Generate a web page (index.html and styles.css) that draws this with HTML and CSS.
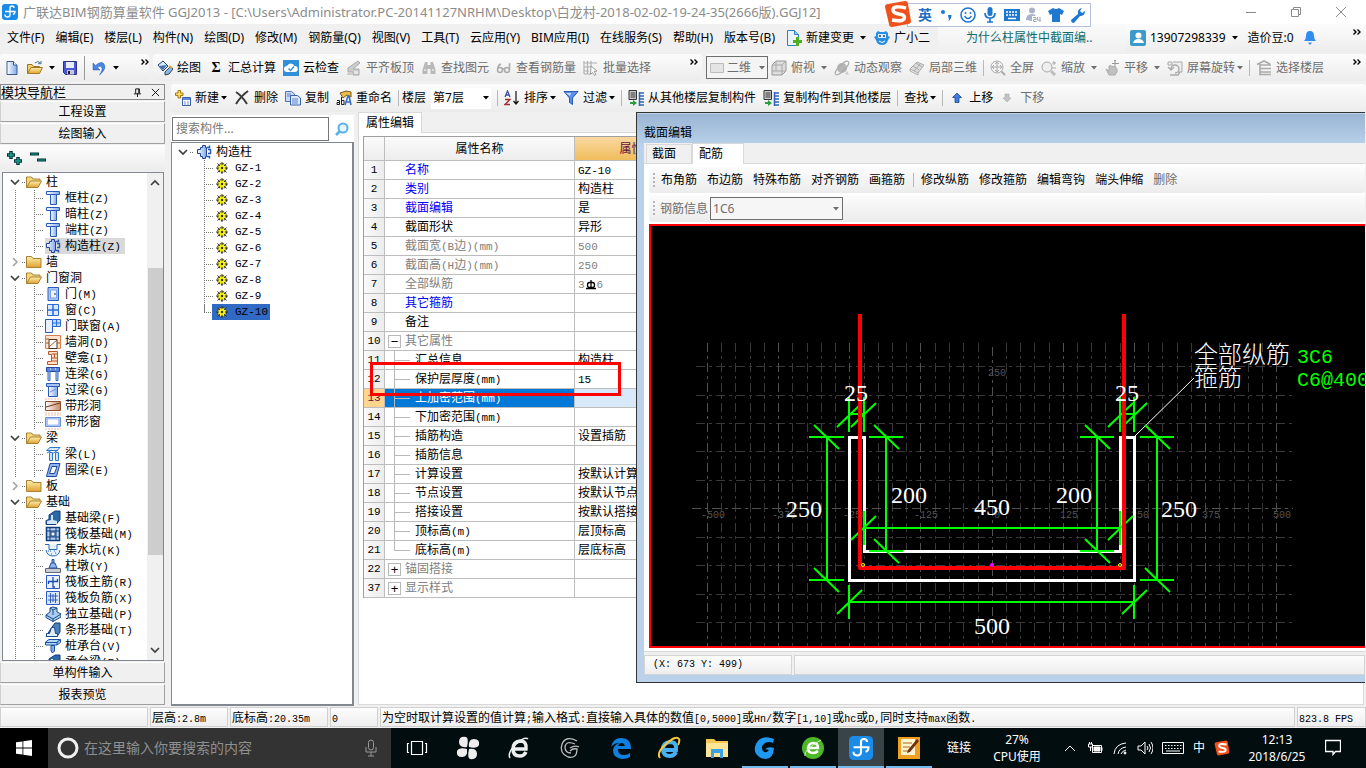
FILE: index.html
```html
<!DOCTYPE html>
<html lang="zh-CN">
<head>
<meta charset="utf-8">
<title>广联达BIM钢筋算量软件 GGJ2013</title>
<link rel="stylesheet" href="styles.css">
</head>
<body>
<svg class="defs" aria-hidden="true">
  <defs>
    <linearGradient id="gBlue" x1="0" x2="1"><stop offset="0" stop-color="#fff"/><stop offset="1" stop-color="#7fa8ec"/></linearGradient>
    <linearGradient id="gGold" y1="0" x2="0" y2="1"><stop offset="0" stop-color="#fff0b0"/><stop offset="1" stop-color="#e0a030"/></linearGradient>
    <linearGradient id="gBrown" x1="0" x2="1"><stop offset="0" stop-color="#fff"/><stop offset="1" stop-color="#c98a60"/></linearGradient>
  </defs>
  <symbol id="caret" viewBox="0 0 6 4"><path d="M0 0h6L3 3.500z" fill="currentColor"/></symbol>
  <symbol id="more" viewBox="0 0 8 6"><path d="M.5.500 3 3 .5 5.500M4.500.500 7 3 4.500 5.500" fill="none" stroke="#000" stroke-width="1.400"/></symbol>
  <symbol id="app" viewBox="0 0 16 16"><rect width="16" height="16" rx="3" fill="#1b8be8"/><path d="M8 3v7.500Q8 13 5.500 13T3 10.500M3 7.500h10q0 2.500-2 3M8 4q0-2 2-2t2 2" fill="none" stroke="#fff" stroke-width="1.400"/></symbol>
  <symbol id="new" viewBox="0 0 16 16"><path d="M3 1.500h6.500l3.500 3.500v9.500H3z" fill="url(#gBlue)" stroke="#3c5c8c"/><path d="M9.500 1.500V5H13" fill="#fff" stroke="#3c5c8c"/></symbol>
  <symbol id="open" viewBox="0 0 16 16"><path d="M.5 13.500v-9h4.500l1.500 2h6v2" fill="#f0cf70" stroke="#9a7422"/><path d="M.5 13.500 4 7.500h11.500l-3 6z" fill="url(#gGold)" stroke="#a67a20"/><path d="M8 3q3-3 5.500 0M14 1v2.700h-3" fill="none" stroke="#4b6e9c"/></symbol>
  <symbol id="save" viewBox="0 0 16 16"><path d="M1.500 1.500h13v13h-11l-2-2z" fill="#4a57d8" stroke="#2a2f80"/><path d="M4 2h8v6H4z" fill="#e8ecff"/><path d="M5 10h7v4.500H5z" fill="#c8c8d8"/><path d="M6 11h2v3H6z" fill="#222"/></symbol>
  <symbol id="undo" viewBox="0 0 16 16"><path d="M4.500 5.500Q10 .5 13 4q3 5-4.500 11 4-6 2-8-2-1.500-4 .5L9 10H2V3z" fill="#4a84e4" stroke="#2458b0" stroke-width=".5"/></symbol>
  <symbol id="paint" viewBox="0 0 16 16"><path d="M1 5l5-4 5 5-5 5z" fill="#dbe8fa" stroke="#23406e"/><path d="M2 6l8-1-4 5z" fill="#3f6fb5"/><path d="M8 12l5-5 3 2-4 5-4 1z" fill="#8bb8ea" stroke="#345"/><path d="M12 6l3 2" stroke="#e0a040" stroke-width="2"/></symbol>
  <symbol id="cloud" viewBox="0 0 16 16"><path d="M0 0h16v16H0z" fill="#2f8fd8"/><path d="M4 12a3 3 0 0 1 0-6 4 4 0 0 1 7.500 0A3 3 0 0 1 12 12z" fill="#fff"/><path d="m5.500 8.500 2 2 3.500-4" fill="none" stroke="#2f8fd8" stroke-width="1.300"/></symbol>
  <symbol id="slab" viewBox="0 0 16 16"><path d="M2 8 12 1l2 2-7 6h6v6H7v-3H2zM1 14h5" fill="#ccc" stroke="#aaa"/><path d="M9 11v3M11 11v3" stroke="#fff"/></symbol>
  <symbol id="find" viewBox="0 0 16 16"><path d="M4 2h2.500v3h3V2H12l2.500 8v4h-5V9h-3v5h-5v-4z" fill="#b8b8b8"/><path d="M3 10h2M11 10h2" stroke="#fff"/></symbol>
  <symbol id="glasses" viewBox="0 0 16 16"><g fill="none" stroke="#aaa" stroke-width="1.500"><circle cx="4" cy="10" r="2.500"/><circle cx="11" cy="10" r="2.500"/><path d="M6.500 9h2M2 8q0-3 3-4M13.500 10V4h1"/></g></symbol>
  <symbol id="batch" viewBox="0 0 16 16"><path d="M1 1v13M4.500 1v13M8 1v6M1 3h13M1 7h8M1 11h5M1 14h6" stroke="#b0b0b0" stroke-width="1.200"/><path d="M8 6l6 5-3 .5 2 3-1.500 1-2-3-2 2z" fill="#fff" stroke="#999"/></symbol>
  <symbol id="cube" viewBox="0 0 16 16"><path d="M1 5 5 1h10v10l-4 4H1z" fill="#ddd" stroke="#999"/><path d="M1 5h10v10M11 5l4-4M5 1v10H1M5 11h10" fill="none" stroke="#aaa"/></symbol>
  <symbol id="orbit" viewBox="0 0 16 16"><circle cx="8" cy="8" r="5" fill="#b5b5b5"/><ellipse cx="8" cy="8" rx="9" ry="3" transform="rotate(-45 8 8)" fill="none" stroke="#aaa"/><path d="M11 14l4 1-2-4z" fill="#ccc"/></symbol>
  <symbol id="local3" viewBox="0 0 16 16"><path d="m1 9 7-7 7 3-6 8z" fill="#ddd" stroke="#aaa"/><path d="m4 6 6 4M7 3l6 4M5 11l6-7M1 9v2l8 4V13" stroke="#aaa" fill="none"/></symbol>
  <symbol id="fit" viewBox="0 0 16 16"><circle cx="7" cy="7" r="6" fill="#f4f4f4" stroke="#aaa"/><path d="M7 3v8M3 7h8M5 4l2-2 2 2M5 10l2 2 2-2M4 5 2 7l2 2M10 5l2 2-2 2" fill="none" stroke="#aaa"/><path d="m11.500 11.500 3.500 3.500" stroke="#aaa" stroke-width="2"/></symbol>
  <symbol id="zoomi" viewBox="0 0 16 16"><circle cx="6" cy="7" r="5" fill="#eee" stroke="#aaa"/><path d="m10 11 4 4" stroke="#bbb" stroke-width="3"/><path d="M11 3h4M13 1v4M11 8h4" stroke="#aaa"/></symbol>
  <symbol id="pan" viewBox="0 0 16 16"><path d="M2 9l3 2V6q1-1 2 0l4 1q3 1 2 5l-2 3H5z" fill="#c0c0c0" stroke="#aaa"/><path d="M11 0v7M8 3.500h7M10 1l1-1 1 1" stroke="#999" fill="none"/></symbol>
  <symbol id="rotate" viewBox="0 0 16 16"><path d="M1 2h4v3H1zM6 2h9v10h-4" fill="#eee" stroke="#aaa"/><path d="M4 9a4 4 0 1 1 4 4M1 7l3 3 3-3M3 15h8l2-3" fill="none" stroke="#aaa" stroke-width="1.400"/></symbol>
  <symbol id="floors" viewBox="0 0 16 16"><path d="M1 4.500 8 1l6 3M4 5h11M4 8.500h11M4 12h11M3 14.500h12M4 4v11" fill="none" stroke="#aaa" stroke-width="1.600"/></symbol>
  <symbol id="flat" viewBox="0 0 16 16"><path d="M1.500 3.500h13v9h-13z" fill="#e4e4e4" stroke="#bbb"/></symbol>
  <symbol id="add" viewBox="0 0 16 16"><path d="M3 .5h2.500V3H8v2.500H5.500V8H3V5.500H.5V3H3z" fill="#ffe060" stroke="#a07a10"/><path d="M7.500 7.500h8v8h-8z" fill="#fff" stroke="#3b62ad"/><path d="M8 8h7v2H8z" fill="#5b8be0"/><path d="M9 12h2M12 12h2M9 14h2M12 14h2" stroke="#6a8fd8"/></symbol>
  <symbol id="del" viewBox="0 0 16 16"><path d="M2 2q6 4 11 12M14 1Q7 6 2 14" fill="none" stroke="#3c3c3c" stroke-width="2"/></symbol>
  <symbol id="copy" viewBox="0 0 16 16"><path d="M.5 1.500h6l3 2.500v7.500h-9z" fill="#c8dafa" stroke="#4f74b5"/><path d="M5.500 5.500h7l3 2.500v7h-10z" fill="#dce8ff" stroke="#3a62ab"/><path d="M2 4h4M2 6h3M7 9h6M7 11h6M7 13h6" stroke="#5d86cc"/></symbol>
  <symbol id="rename" viewBox="0 0 16 16"><path d="M4 3l6-2 5 1v5l-4-2-4 3z" fill="#e8bd4e" stroke="#7a5a18"/><path d="M1 10.500h2.500v4H1v-2h2M5.500 7v7.500h2.500v-4H5.500" fill="none" stroke="#222"/><path d="m9 15 3-9h1l2 9M10 12h4" fill="none" stroke="#3a6cc8" stroke-width="1.600"/></symbol>
  <symbol id="sort" viewBox="0 0 16 16"><path d="M1 7 3.500 1 6 7M2 5h3" fill="none" stroke="#3a50a0" stroke-width="1.300"/><path d="M1 9.500h5l-5 5h5" fill="none" stroke="#a03030" stroke-width="1.300"/><path d="M12 1v13M9.500 11l2.500 3 2.500-3" fill="none" stroke="#111" stroke-width="1.200"/></symbol>
  <symbol id="funnel" viewBox="0 0 16 16"><path d="M1 1.500h14L9.500 8v6.500l-3-2V8z" fill="#5a90e8" stroke="#2a5ab8"/><path d="M3 3h5L7 6z" fill="#c8dcff"/></symbol>
  <symbol id="flcopy" viewBox="0 0 16 16"><path d="M1 .5h7.500v9H1z" fill="#ccc" stroke="#333"/><path d="M2.500 3h5M2.500 5h5M2.500 7h5" stroke="#333"/><path d="M2 12h3v-2l4 3-4 3v-2H2z" fill="#28a040"/><path d="M11 3h5M11 6h5M11 9h5M11 12h5M11 15h5M11.500 2v14" stroke="#2f65b8" stroke-width="1.500"/></symbol>
  <symbol id="up" viewBox="0 0 16 16"><path d="m8 3 4.500 4.500H10v5H6v-5H3.500z" fill="#3f7be0" stroke="#1c4690" stroke-width=".8"/></symbol>
  <symbol id="down" viewBox="0 0 16 16"><path d="m7 12 4-4H9V4H5v4H3z" fill="#c4c4c4" stroke="#aaa" stroke-width=".6"/></symbol>
  <symbol id="chg" viewBox="0 0 16 16"><path d="M1.500.5h7l4 4v11h-11z" fill="#eaf4ff" stroke="#2c7fc0"/><path d="M8.500.5v4h4" fill="#9cc8ee" stroke="#2c7fc0"/><path d="M10 7h3v3h3v3h-3v3h-3v-3H7v-3h3z" fill="#4cb020"/></symbol>
  <symbol id="robot" viewBox="0 0 16 16"><path d="M2 3l2-2 2 1h4l2-1 2 2v3l2 1-2 3q-1 5-6 5t-6-5L0 7l2-1z" fill="#2a8ee0"/><path d="M4 4h8v4H4z" fill="#d8f0ff"/><path d="M6 5v2M10 5v2" stroke="#124" stroke-width="1.300"/><path d="M5 11q3 3 6 0" stroke="#fff" fill="none"/></symbol>
  <symbol id="user" viewBox="0 0 16 16"><rect width="16" height="16" rx="2" fill="#3c9bc8"/><circle cx="8.500" cy="5.500" r="3" fill="#fff"/><path d="M3 13q1-4 5.500-4t5.500 4z" fill="#fff"/></symbol>
  <symbol id="bell" viewBox="0 0 16 16"><path d="M8 1q4 0 4 5 0 3 2 5H2q2-2 2-5 0-5 4-5z" fill="#2f8cf0"/><path d="M6 12.500h4L8 15z" fill="#2f8cf0"/></symbol>
  <symbol id="fopen" viewBox="0 0 16 16"><path d="M.5 13.500V3h5l1.500 2h7v3" fill="#f5d77c" stroke="#a5823a"/><path d="m.5 13.500 4-6.500h11l-3.500 6.500z" fill="url(#gGold)" stroke="#a88230"/></symbol>
  <symbol id="fclosed" viewBox="0 0 16 16"><path d="M.5 13.500V2.500h5l1.500 2h8v9z" fill="url(#gGold)" stroke="#a88230"/></symbol>
  <symbol id="col" viewBox="0 0 16 16"><path d="M1.500 1.500h13v3h-13z" fill="url(#gBlue)" stroke="#2a58b8"/><path d="M5.500 4.500h6v10h-6z" fill="url(#gBlue)" stroke="#2a58b8"/></symbol>
  <symbol id="gz" viewBox="0 0 16 16"><path d="M4.500 3.500h2v-2h3v2h1v9h-1v2h-3v-2h-2v-3h-3v-4h3z" fill="url(#gBlue)" stroke="#1e4290"/><path d="M10.500 3.500h3v-2M12 5.500h2.500v4H12M10.500 12.500h3v2" fill="none" stroke="#2a58b0" stroke-width="1.500"/></symbol>
  <symbol id="door" viewBox="0 0 16 16"><path d="M3 1.500h10.500v13H3z" fill="#a9c5f8" stroke="#2a5cc0"/><path d="M5.500 4h6v8h-6z" fill="#eef4ff" stroke="#7aa2e8"/><path d="M9 8h2" stroke="#224"/></symbol>
  <symbol id="win" viewBox="0 0 16 16"><path d="M2.500 2.500h11v11h-11z" fill="#dce9ff" stroke="#2a6cd8"/><path d="M8 2v12M2 8h12" stroke="#2a6cd8" stroke-width="1.500"/></symbol>
  <symbol id="dwin" viewBox="0 0 16 16"><path d="M.5 1.500h7v13h-7z" fill="#e8f0ff" stroke="#2a58b8"/><path d="M7.500 1.500h8v7h-8zM11.500 1.500v7M7.500 5h8" fill="#c4dafc" stroke="#2a6cd8"/></symbol>
  <symbol id="hole" viewBox="0 0 16 16"><path d="M.5 1.500h15v13H.5z" fill="#ffe3cc" stroke="#d08050"/><path d="M4 5.500h8v9H4z" fill="#fff" stroke="#553020"/><path d="m4 13 8-7M1 5h3M1 9h3M12 9h3" stroke="#a05828"/></symbol>
  <symbol id="niche" viewBox="0 0 16 16"><path d="M3.500 1.500h9v13h-10v-3h4v-7h-3z" fill="#ffe0c8" stroke="#b05a28"/><path d="M7 4h5M7 8h5M7 11h5M9.500 4v4" stroke="#b05a28"/></symbol>
  <symbol id="lbeam" viewBox="0 0 16 16"><path d="M1.500 1.500h13v4h-13z" fill="#5c88d8" stroke="#1e4aa0"/><path d="M3 5.500h2v9H3zM11 5.500h2v9h-2z" fill="#b8d0f8" stroke="#3a68c0"/><path d="M5 3h1M10 3h1" stroke="#fff"/></symbol>
  <symbol id="gbeam" viewBox="0 0 16 16"><path d="M1.500 1.500h13v3h-13z" fill="#a8c4f0" stroke="#2a58b8"/><path d="M3.500 4.500h9v10h-9z" fill="url(#gBlue)" stroke="#2a58b8"/><path d="m5 10 6-3" stroke="#6890d8"/></symbol>
  <symbol id="strip" viewBox="0 0 16 16"><path d="M0 1h16M0 15h16" stroke="#f0b8a8" stroke-dasharray="2 1"/><path d="M.5 3.500h15v9H.5z" fill="url(#gBrown)" stroke="#8a5030"/><path d="m1 9 14-4" stroke="#6b3a1c"/></symbol>
  <symbol id="stripw" viewBox="0 0 16 16"><path d="M0 1h16M0 15h16" stroke="#f0b8a8" stroke-dasharray="2 1"/><path d="M.5 3.500h15v9H.5z" fill="#a8c4f4" stroke="#6a8cd0"/><path d="M3 5.500h10v5H3z" fill="#fff"/></symbol>
  <symbol id="beam" viewBox="0 0 16 16"><path d="M1.500 4.500 5 1.500h10l-3 3z" fill="#dcebff" stroke="#2b7ac8"/><path d="M4.500 6.500h3v8h-3zM10.500 6.500h3v8h-3z" fill="#cfe4ff" stroke="#2b7ac8"/><path d="m2 7 5-3M7 8l6-4" stroke="#2b7ac8"/></symbol>
  <symbol id="ring" viewBox="0 0 16 16"><path d="M5 1.500h10L11.500 14.500h-10z" fill="#90b4f0" stroke="#1e48a0"/><path d="M7 4.500h5L9.500 11.500h-5z" fill="#fff" stroke="#1e48a0"/></symbol>
  <symbol id="fbeam" viewBox="0 0 16 16"><path d="M1 14.500v-4l3-1V5l6-4h5v9l-4 4.500z" fill="#2c68a8" stroke="#123c78"/><path d="M2 14v-3l4-1V5h2v5l4 1v3z" fill="#d4e6fa"/></symbol>
  <symbol id="raft" viewBox="0 0 16 16"><path d="M1.500 1.500h13v13h-13z" fill="#b8d0f0" stroke="#0f3c7c" stroke-width="1.500"/><path d="M5 1v14M11 1v14M1 5h14M1 11h14" stroke="#0f3c7c"/><path d="M6 6h4v4H6z" fill="#fff" stroke="#0f3c7c"/></symbol>
  <symbol id="sump" viewBox="0 0 16 16"><path d="M0 2.500h4v5h8v-5h4M1 8q1 6 7 6t7-6" fill="#e4f0ff" stroke="#2a68b8"/><path d="M5 9h1M9 9h1M6 12h1M10 11h1M3 9h1" stroke="#2a68b8"/></symbol>
  <symbol id="pier" viewBox="0 0 16 16"><path d="M.5 10.500h15v4H.5z" fill="#c8ccd4" stroke="#667"/><path d="M4 10l2-5h4l2 5zM7 5V1.500h2V5" fill="#8fb4ec" stroke="#2450a0"/></symbol>
  <symbol id="rbar" viewBox="0 0 16 16"><path d="M1.500 1.500h13v13h-13z" fill="#eaf2ff" stroke="#2a5cc8"/><path d="M8 3v10h2M3.500 10V7.500h9V5" fill="none" stroke="#1a4ab0" stroke-width="1.300"/></symbol>
  <symbol id="rneg" viewBox="0 0 16 16"><path d="M1.500 1.500h13v13h-13z" fill="#dbe8fc" stroke="#2a5cc8"/><path d="M5.500 3v10M10.500 3v10M3 6h10M3 10h10M8 4v8" stroke="#3260b8"/></symbol>
  <symbol id="indep" viewBox="0 0 16 16"><path d="M1 9 5 6V2l3-1 4 1v4l4 2v3l-8 4.500-7-4z" fill="#a8cdee" stroke="#1a4c88"/><path d="m1 9 7 4 8-5M8 13v3M5 2l3 2 4-2M8 4v5" fill="none" stroke="#1a4c88"/></symbol>
  <symbol id="sfound" viewBox="0 0 16 16"><path d="M1 14.500 5 8l5-7h5v9l-3 4.500z" fill="#4b80ba" stroke="#123c78"/><path d="M1.500 14.500v-3h3l2-6h3l1 6h2v3z" fill="#e0eefc" stroke="#1b4c88"/></symbol>
  <symbol id="pile" viewBox="0 0 16 16"><path d="M.5 4 4 1.500h11.500v3L12 7H.5z" fill="#b8d8f8" stroke="#1a50a0"/><path d="M.5 4.500H12M12 7V4l3-2M6 7.500h3.500V13L7.500 15 6 13z" fill="#7fb0e8" stroke="#1a50a0"/></symbol>
  <symbol id="gear" viewBox="0 0 12 12"><circle cx="6" cy="6" r="4.500" fill="#f8f020" stroke="#222" stroke-dasharray="2 1"/><path d="M6 0v12M0 6h12M1.500 1.500l9 9M10.500 1.500l-9 9" stroke="#333" stroke-width="1"/><circle cx="6" cy="6" r="3" fill="#f8f020"/><circle cx="6" cy="6" r="1.200" fill="#333"/></symbol>
  <symbol id="exp" viewBox="0 0 10 10"><path d="m1 3 4 4 4-4" fill="none" stroke="#404040" stroke-width="1.700"/></symbol>
  <symbol id="clp" viewBox="0 0 10 10"><path d="m3 1 4 4-4 4" fill="none" stroke="#a0a0a0" stroke-width="1.500"/></symbol>
  <symbol id="sg" viewBox="0 0 28 28"><path d="M1 7q0-3 3-3L21 1q3 0 3 3l3 17q0 3-3 3L8 27q-3 0-3-3z" fill="#f0501c"/><path d="M22 8Q9 5 9 10q0 3 6 4 7 1 5 5-2 3-12 1" fill="none" stroke="#fff" stroke-width="3.500"/></symbol>
</svg>

<header class="titlebar">
  <svg class="i16"><use href="#app"/></svg>
  <h1>广联达BIM钢筋算量软件 GGJ2013 - [C:\Users\Administrator.PC-20141127NRHM\Desktop\白龙村-2018-02-02-19-24-35(2666版).GGJ12]</h1>
  <div class="winctl">
    <button aria-label="最小化"><svg viewBox="0 0 12 12"><path d="M1 6.500h10"/></svg></button>
    <button aria-label="还原"><svg viewBox="0 0 12 12"><path d="M1.500 3.500h7v7h-7zM3.500 3V1.500h7v7H9"/></svg></button>
    <button aria-label="关闭"><svg viewBox="0 0 12 12"><path d="m1 1 10 10M11 1 1 11"/></svg></button>
  </div>
</header>

<div class="ime">
  <svg class="imelogo"><use href="#sg"/></svg>
  <div class="imebar">
    <b>英</b>
    <svg viewBox="0 0 16 16"><circle cx="5" cy="5" r="2"/><path d="M10 8h3.500q0 4-3 6 1-2 0-3z"/></svg>
    <svg viewBox="0 0 16 16"><circle cx="8" cy="8" r="7" fill="none" stroke="#1f78d0" stroke-width="1.600"/><circle cx="5.500" cy="6" r="1"/><circle cx="10.500" cy="6" r="1"/><path d="M4.500 9q3.500 5 7 0" fill="none" stroke="#1f78d0" stroke-width="1.400"/></svg>
    <svg viewBox="0 0 16 16"><rect x="5.500" y="0" width="5" height="9" rx="2.500"/><path d="M3 6q0 5 5 5t5-5M8 11v4M5 15h6" fill="none" stroke="#1f78d0" stroke-width="1.700"/></svg>
    <svg viewBox="0 0 16 16"><path d="M0 2h16v12H0z"/><path d="M2 5h12M2 8h12" stroke="#fff" stroke-width="1.500" stroke-dasharray="2 1"/><path d="M4 11.500h8" stroke="#fff" stroke-width="1.500"/></svg>
    <svg viewBox="0 0 16 16" class="dim"><circle cx="6" cy="3.500" r="3"/><path d="M0 13q0-6 6-6 3 0 4 2H6v5z"/><path d="M7 10.500h3v2H7.500v2h3M11.500 10v3h3M14 10v5" fill="none" stroke="#9aa8c0"/></svg>
    <svg viewBox="0 0 16 16"><path d="M5 1q3 2 6 0l5 3-2 4-2-1v8H4V7L2 8 0 4z"/></svg>
    <svg viewBox="0 0 16 16"><path d="M1 13 8 7Q7 2 12 1l-2 3 2 2 3-2q0 5-5 5l-6 7q-3 0-3-3z"/></svg>
  </div>
</div>

<nav class="menubar">
  <div class="menus">
    <button>文件(F)</button><button>编辑(E)</button><button>楼层(L)</button><button>构件(N)</button><button>绘图(D)</button><button>修改(M)</button><button>钢筋量(Q)</button><button>视图(V)</button><button>工具(T)</button><button>云应用(Y)</button><button>BIM应用(I)</button><button>在线服务(S)</button><button>帮助(H)</button><button>版本号(B)</button>
    <button class="tb"><svg class="i16"><use href="#chg"/></svg>新建变更<svg class="car wide"><use href="#caret"/></svg></button>
    <button class="tb robot"><svg class="i16"><use href="#robot"/></svg>广小二</button>
  </div>
  <a class="tip" href="#">为什么柱属性中截面编..</a>
  <div class="account">
    <button class="tb"><svg class="i16"><use href="#user"/></svg>13907298339<svg class="car wide"><use href="#caret"/></svg></button>
    <span>造价豆:0</span>
    <button class="tb bell" aria-label="通知"><svg class="i16"><use href="#bell"/></svg></button>
    <svg class="more"><use href="#more"/></svg>
  </div>
</nav>

<div class="toolrow">
  <div class="bar bar-file">
    <button aria-label="新建"><svg class="i16"><use href="#new"/></svg></button>
    <button class="tb" aria-label="打开"><svg class="i16"><use href="#open"/></svg><svg class="car wide"><use href="#caret"/></svg></button>
    <button aria-label="保存"><svg class="i16"><use href="#save"/></svg></button>
    <i class="sep tall"></i>
    <button class="tb" aria-label="撤销"><svg class="i16"><use href="#undo"/></svg><svg class="car wide"><use href="#caret"/></svg></button>
    <svg class="more"><use href="#more"/></svg>
  </div>
  <div class="bar bar-edit">
    <button class="tb"><svg class="i16"><use href="#paint"/></svg>绘图</button>
    <button class="tb"><span class="sigma">Σ</span>汇总计算</button>
    <button class="tb"><svg class="i16"><use href="#cloud"/></svg>云检查</button>
    <button class="tb off"><svg class="i16"><use href="#slab"/></svg>平齐板顶</button>
    <button class="tb off"><svg class="i16"><use href="#find"/></svg>查找图元</button>
    <button class="tb off"><svg class="i16"><use href="#glasses"/></svg>查看钢筋量</button>
    <button class="tb off"><svg class="i16"><use href="#batch"/></svg>批量选择</button>
    <svg class="more"><use href="#more"/></svg>
  </div>
  <div class="bar bar-view">
    <label class="viewsel"><svg class="i16"><use href="#flat"/></svg><select aria-label="视图模式"><option>二维</option></select><svg class="car"><use href="#caret"/></svg></label>
    <button class="tb off"><svg class="i16"><use href="#cube"/></svg>俯视<svg class="car wide"><use href="#caret"/></svg></button>
    <button class="tb off"><svg class="i16"><use href="#orbit"/></svg>动态观察</button>
    <button class="tb off"><svg class="i16"><use href="#local3"/></svg>局部三维</button>
    <i class="sep"></i>
    <button class="tb off"><svg class="i16"><use href="#fit"/></svg>全屏</button>
    <button class="tb off"><svg class="i16"><use href="#zoomi"/></svg>缩放<svg class="car wide"><use href="#caret"/></svg></button>
    <button class="tb off"><svg class="i16"><use href="#pan"/></svg>平移<svg class="car wide"><use href="#caret"/></svg></button>
    <button class="tb off"><svg class="i16"><use href="#rotate"/></svg>屏幕旋转<svg class="car"><use href="#caret"/></svg></button>
    <i class="sep"></i>
    <button class="tb off"><svg class="i16"><use href="#floors"/></svg>选择楼层</button>
    <svg class="more"><use href="#more"/></svg>
  </div>
</div>

<main class="work">
  <aside class="nav">
    <div class="navhead"><span>模块导航栏</span>
      <button aria-label="固定"><svg viewBox="0 0 10 10"><path d="M3 6V1h4v5M1 6.500h8M5 6v4M6.500 1v5"/></svg></button>
      <button aria-label="关闭"><svg viewBox="0 0 10 10"><path d="m1 1 8 8M9 1 1 9"/></svg></button>
    </div>
    <button class="navbtn">工程设置</button>
    <button class="navbtn">绘图输入</button>
    <div class="navtools">
      <button aria-label="展开全部"><svg viewBox="0 0 18 16"><path d="M5 1v8M1 5h8M12 7v8M8 11h8" stroke="#033" stroke-width="3.500"/><path d="M5 2v6M2 5h6M12 8v6M9 11h6" stroke="#18a090" stroke-width="1.500"/></svg></button>
      <button aria-label="折叠全部"><svg viewBox="0 0 18 16"><path d="M1 4h9M8 10h9" stroke="#033" stroke-width="3"/><path d="M2 4h7M9 10h7" stroke="#18a090"/></svg></button>
    </div>
    <div class="treebox">
      <ul class="tree">
        <li><svg class="ex"><use href="#exp"/></svg><i class="dot s"></i><svg class="i16"><use href="#fopen"/></svg>柱</li>
        <li class="c"><i class="dot"></i><svg class="i16"><use href="#col"/></svg><span>框柱<em>(Z)</em></span></li>
        <li class="c"><i class="dot"></i><svg class="i16"><use href="#col"/></svg><span>暗柱<em>(Z)</em></span></li>
        <li class="c"><i class="dot"></i><svg class="i16"><use href="#col"/></svg><span>端柱<em>(Z)</em></span></li>
        <li class="c e sel"><i class="dot"></i><div><svg class="i16"><use href="#gz"/></svg><span>构造柱<em>(Z)</em></span></div></li>
        <li><svg class="ex"><use href="#clp"/></svg><i class="dot s"></i><svg class="i16"><use href="#fclosed"/></svg>墙</li>
        <li><svg class="ex"><use href="#exp"/></svg><i class="dot s"></i><svg class="i16"><use href="#fopen"/></svg>门窗洞</li>
        <li class="c"><i class="dot"></i><svg class="i16"><use href="#door"/></svg><span>门<em>(M)</em></span></li>
        <li class="c"><i class="dot"></i><svg class="i16"><use href="#win"/></svg><span>窗<em>(C)</em></span></li>
        <li class="c"><i class="dot"></i><svg class="i16"><use href="#dwin"/></svg><span>门联窗<em>(A)</em></span></li>
        <li class="c"><i class="dot"></i><svg class="i16"><use href="#hole"/></svg><span>墙洞<em>(D)</em></span></li>
        <li class="c"><i class="dot"></i><svg class="i16"><use href="#niche"/></svg><span>壁龛<em>(I)</em></span></li>
        <li class="c"><i class="dot"></i><svg class="i16"><use href="#lbeam"/></svg><span>连梁<em>(G)</em></span></li>
        <li class="c"><i class="dot"></i><svg class="i16"><use href="#gbeam"/></svg><span>过梁<em>(G)</em></span></li>
        <li class="c"><i class="dot"></i><svg class="i16"><use href="#strip"/></svg><span>带形洞</span></li>
        <li class="c e"><i class="dot"></i><svg class="i16"><use href="#stripw"/></svg><span>带形窗</span></li>
        <li><svg class="ex"><use href="#exp"/></svg><i class="dot s"></i><svg class="i16"><use href="#fopen"/></svg>梁</li>
        <li class="c"><i class="dot"></i><svg class="i16"><use href="#beam"/></svg><span>梁<em>(L)</em></span></li>
        <li class="c e"><i class="dot"></i><svg class="i16"><use href="#ring"/></svg><span>圈梁<em>(E)</em></span></li>
        <li><svg class="ex"><use href="#clp"/></svg><i class="dot s"></i><svg class="i16"><use href="#fclosed"/></svg>板</li>
        <li><svg class="ex"><use href="#exp"/></svg><i class="dot s"></i><svg class="i16"><use href="#fopen"/></svg>基础</li>
        <li class="c"><i class="dot"></i><svg class="i16"><use href="#fbeam"/></svg><span>基础梁<em>(F)</em></span></li>
        <li class="c"><i class="dot"></i><svg class="i16"><use href="#raft"/></svg><span>筏板基础<em>(M)</em></span></li>
        <li class="c"><i class="dot"></i><svg class="i16"><use href="#sump"/></svg><span>集水坑<em>(K)</em></span></li>
        <li class="c"><i class="dot"></i><svg class="i16"><use href="#pier"/></svg><span>柱墩<em>(Y)</em></span></li>
        <li class="c"><i class="dot"></i><svg class="i16"><use href="#rbar"/></svg><span>筏板主筋<em>(R)</em></span></li>
        <li class="c"><i class="dot"></i><svg class="i16"><use href="#rneg"/></svg><span>筏板负筋<em>(X)</em></span></li>
        <li class="c"><i class="dot"></i><svg class="i16"><use href="#indep"/></svg><span>独立基础<em>(P)</em></span></li>
        <li class="c"><i class="dot"></i><svg class="i16"><use href="#sfound"/></svg><span>条形基础<em>(T)</em></span></li>
        <li class="c"><i class="dot"></i><svg class="i16"><use href="#pile"/></svg><span>桩承台<em>(V)</em></span></li>
        <li class="c"><i class="dot"></i><svg class="i16"><use href="#fbeam"/></svg><span>承台梁<em>(F)</em></span></li>
      </ul>
      <div class="scroll"><svg class="ex flip"><use href="#exp"/></svg><div class="thumb"></div><svg class="ex"><use href="#exp"/></svg></div>
    </div>
    <button class="navbtn">单构件输入</button>
    <button class="navbtn">报表预览</button>
  </aside>

  <section class="right">
    <div class="bar bar-comp">
      <button class="tb"><svg class="i16"><use href="#add"/></svg>新建<svg class="car"><use href="#caret"/></svg></button>
      <button class="tb"><svg class="i16"><use href="#del"/></svg>删除</button>
      <button class="tb"><svg class="i16"><use href="#copy"/></svg>复制</button>
      <button class="tb"><svg class="i16"><use href="#rename"/></svg>重命名</button>
      <i class="sep"></i>
      <label class="floor">楼层 <span class="floorsel"><select><option>第7层</option></select><svg class="car"><use href="#caret"/></svg></span></label>
      <i class="sep"></i>
      <button class="tb"><svg class="i16"><use href="#sort"/></svg>排序<svg class="car"><use href="#caret"/></svg></button>
      <button class="tb"><svg class="i16"><use href="#funnel"/></svg>过滤<svg class="car"><use href="#caret"/></svg></button>
      <i class="sep"></i>
      <button class="tb"><svg class="i16"><use href="#flcopy"/></svg>从其他楼层复制构件</button>
      <button class="tb"><svg class="i16"><use href="#flcopy"/></svg>复制构件到其他楼层</button>
      <i class="sep"></i>
      <button class="tb">查找<svg class="car"><use href="#caret"/></svg></button>
      <i class="sep"></i>
      <button class="tb"><svg class="i16"><use href="#up"/></svg>上移</button>
      <button class="tb off"><svg class="i16"><use href="#down"/></svg>下移</button>
    </div>
    <div class="panes">
      <section class="comps">
        <div class="search"><input type="text" placeholder="搜索构件..." aria-label="搜索构件"><button aria-label="搜索"><svg viewBox="0 0 14 14"><circle cx="8" cy="6" r="4.500" fill="#e8f6ff" stroke="#58b0e8" stroke-width="2"/><path d="m5 9-4 4" stroke="#58b0e8" stroke-width="2.500"/></svg></button></div>
        <ul class="ctree">
          <li class="top"><svg class="ex"><use href="#exp"/></svg><i class="dot s"></i><svg class="i16"><use href="#gz"/></svg>构造柱</li>
          <li><i class="dot"></i><div><svg class="g"><use href="#gear"/></svg><em>GZ-1</em></div></li>
          <li><i class="dot"></i><div><svg class="g"><use href="#gear"/></svg><em>GZ-2</em></div></li>
          <li><i class="dot"></i><div><svg class="g"><use href="#gear"/></svg><em>GZ-3</em></div></li>
          <li><i class="dot"></i><div><svg class="g"><use href="#gear"/></svg><em>GZ-4</em></div></li>
          <li><i class="dot"></i><div><svg class="g"><use href="#gear"/></svg><em>GZ-5</em></div></li>
          <li><i class="dot"></i><div><svg class="g"><use href="#gear"/></svg><em>GZ-6</em></div></li>
          <li><i class="dot"></i><div><svg class="g"><use href="#gear"/></svg><em>GZ-7</em></div></li>
          <li><i class="dot"></i><div><svg class="g"><use href="#gear"/></svg><em>GZ-8</em></div></li>
          <li><i class="dot"></i><div><svg class="g"><use href="#gear"/></svg><em>GZ-9</em></div></li>
          <li class="e sel"><i class="dot"></i><div><svg class="g"><use href="#gear"/></svg><em>GZ-10</em></div></li>
        </ul>
      </section>

      <section class="editor">
        <div class="tabs"><button class="tab on">属性编辑</button></div>
        <div class="sheet">
          <table class="props">
            <colgroup><col class="cn"><col class="cname"><col class="cval"><col></colgroup>
            <thead><tr><th></th><th>属性名称</th><th class="hot">属性值</th><th></th></tr></thead>
            <tbody>
              <tr><th>1</th><td class="b">名称</td><td><em>GZ-10</em></td><td></td></tr>
              <tr><th>2</th><td class="b">类别</td><td>构造柱</td><td></td></tr>
              <tr><th>3</th><td class="b">截面编辑</td><td>是</td><td></td></tr>
              <tr><th>4</th><td>截面形状</td><td>异形</td><td></td></tr>
              <tr class="dim"><th>5</th><td>截面宽<em>(B</em>边<em>)(mm)</em></td><td><em>500</em></td><td></td></tr>
              <tr class="dim"><th>6</th><td>截面高<em>(H</em>边<em>)(mm)</em></td><td><em>250</em></td><td></td></tr>
              <tr class="dim"><th>7</th><td>全部纵筋</td><td><em>3</em><svg class="rebar" viewBox="0 0 12 12"><path d="M6 1v9M1 9.500h10M4.500 3.500h3q2 0 2 2.500t-2 2.500h-3q-2 0-2-2.500t2-2.500z"/></svg><em>6</em></td><td></td></tr>
              <tr><th>8</th><td class="b">其它箍筋</td><td></td><td></td></tr>
              <tr><th>9</th><td>备注</td><td></td><td></td></tr>
              <tr class="grp dim open"><th>10</th><td><button aria-label="折叠">−</button>其它属性</td><td></td><td></td></tr>
              <tr class="sub"><th>11</th><td>汇总信息</td><td>构造柱</td><td></td></tr>
              <tr class="sub"><th>12</th><td>保护层厚度<em>(mm)</em></td><td><em>15</em></td><td></td></tr>
              <tr class="sub cur"><th>13</th><td>上加密范围<em>(mm)</em></td><td></td><td></td></tr>
              <tr class="sub"><th>14</th><td>下加密范围<em>(mm)</em></td><td></td><td></td></tr>
              <tr class="sub"><th>15</th><td>插筋构造</td><td>设置插筋</td><td></td></tr>
              <tr class="sub"><th>16</th><td>插筋信息</td><td></td><td></td></tr>
              <tr class="sub"><th>17</th><td>计算设置</td><td>按默认计算设置计算</td><td></td></tr>
              <tr class="sub"><th>18</th><td>节点设置</td><td>按默认节点设置计算</td><td></td></tr>
              <tr class="sub"><th>19</th><td>搭接设置</td><td>按默认搭接设置计算</td><td></td></tr>
              <tr class="sub"><th>20</th><td>顶标高<em>(m)</em></td><td>层顶标高</td><td></td></tr>
              <tr class="sub last"><th>21</th><td>底标高<em>(m)</em></td><td>层底标高</td><td></td></tr>
              <tr class="grp dim"><th>22</th><td><button aria-label="展开">+</button>锚固搭接</td><td></td><td></td></tr>
              <tr class="grp dim"><th>37</th><td><button aria-label="展开">+</button>显示样式</td><td></td><td></td></tr>
            </tbody>
          </table>
        </div>
        <div class="mark"></div>

        <section class="dialog" role="dialog" aria-label="截面编辑">
          <h2>截面编辑</h2>
          <div class="dbody">
            <div class="dtabs"><button>截面</button><button class="on">配筋</button></div>
            <div class="dtools">
              <div class="bar dbar"><i class="grip"></i><button>布角筋</button><button>布边筋</button><button>特殊布筋</button><button>对齐钢筋</button><button>画箍筋</button><i class="sep"></i><button>修改纵筋</button><button>修改箍筋</button><button>编辑弯钩</button><button>端头伸缩</button><button class="off">删除</button></div>
              <div class="bar dinfo"><i class="grip"></i><label for="rebar">钢筋信息</label><span class="combo"><select id="rebar"><option>1C6</option></select><svg class="car"><use href="#caret"/></svg></span></div>
              <div class="canvas">
                <svg width="100%" height="100%">
                  <g transform="translate(-651 -226)" fill="none">
                    <g stroke="#383838" stroke-dasharray="9 4 3 4">
                      <path d="M721.500 343V648M735.500 343V648M750.500 343V648M764.500 343V648M792.500 343V648M807.500 343V648M821.500 343V648M835.500 343V648M864.500 343V648M878.500 343V648M892.500 343V648M906.500 343V648M935.500 343V648M949.500 343V648M963.500 343V648M978.500 343V648M1006.500 343V648M1020.500 343V648M1034.500 343V648M1049.500 343V648M1077.500 343V648M1091.500 343V648M1105.500 343V648M1120.500 343V648M1148.500 343V648M1162.500 343V648M1177.500 343V648M1191.500 343V648M1219.500 343V648M1234.500 343V648M1248.500 343V648M1262.500 343V648"/>
                      <path d="M696 366.500H1293M696 395.500H1293M696 423.500H1293M696 451.500H1293M696 480.500H1293M696 537.500H1293M696 565.500H1293M696 594.500H1293M696 622.500H1293"/>
                    </g>
                    <path d="M707.500 343V648M778.500 343V648M849.500 343V648M920.500 343V648M1063.500 343V648M1134.500 343V648M1205.500 343V648M1276.500 343V648M992.500 347V648M692 508.500H1293" stroke="#505050" stroke-dasharray="9 4 3 4"/>
                    <g class="axis"><text x="701" y="518">-500</text><text x="772" y="518">-375</text><text x="843" y="518">-250</text><text x="914" y="518">-125</text><text x="994" y="518">0</text><text x="1060" y="518">125</text><text x="1131" y="518">250</text><text x="1202" y="518">375</text><text x="1273" y="518">500</text><text x="988" y="376">250</text></g>
                    <path d="M848 437.500H864.500V551.500H1120.500V437.500H1134.500V580.500H849.500V437.500" stroke="#fff" stroke-width="3"/>
                    <path d="m1135 436 59-58" stroke="#fff"/>
                    <g stroke="#0f0" stroke-width="2">
                      <path d="M827 437V580M809 437h35M809 580h35M814 425l25 24M814 568l25 24"/>
                      <path d="M886 437V551M869 437h34M869 551h34M874 425l25 24M874 539l25 24"/>
                      <path d="M849 414h15M849 397v35M864 397v35M837 427l25-24M851 427l25-24"/>
                      <path d="M864 528h256M864 511v34M1120 511v34M851 540l25-24M1108 540l25-24"/>
                      <path d="M849 602h285M849 585v34M1134 585v34M837 614l25-24M1122 614l25-24"/>
                      <path d="M1120 414h14M1120 397v35M1134 397v35M1108 427l25-24M1122 427l25-24"/>
                      <path d="M1097 437V551M1080 437h34M1080 551h34M1085 425l25 24M1085 539l25 24"/>
                      <path d="M1157 437V580M1140 437h34M1140 580h34M1145 425l25 24M1145 568l25 24"/>
                    </g>
                    <path d="M860 314V568H1124V314" stroke="#f00" stroke-width="4" stroke-linejoin="round"/>
                    <circle cx="863" cy="565" r="1.500" stroke="#ff0"/><circle cx="1120" cy="565" r="1.500" stroke="#ff0"/><circle cx="992" cy="565" r="2" fill="#f0f"/>
                    <g class="dimtext"><text x="844" y="401">25</text><text x="1115" y="401">25</text><text x="786" y="517">250</text><text x="891" y="503">200</text><text x="974" y="515">450</text><text x="1056" y="503">200</text><text x="1161" y="517">250</text><text x="974" y="634">500</text></g>
                    <g class="note"><text x="1194" y="363">全部纵筋</text><text x="1194" y="386">箍筋</text></g>
                    <g class="spec"><text x="1297" y="363">3C6</text><text x="1297" y="386">C6@400</text></g>
                  </g>
                </svg>
              </div>
            </div>
            <div class="dstatus"><output>(X: 673 Y: 499)</output><span></span></div>
          </div>
        </section>
      </section>
    </div>
  </section>
</main>

<footer class="status"><span class="s1"></span><span class="s2">层高<em>:2.8m</em></span><span class="s3">底标高<em>:20.35m</em></span><span class="s4"><em>0</em></span><span class="s5">为空时取计算设置的值计算<em>;</em>输入格式<em>:</em>直接输入具体的数值<em>[0,5000]</em>或<em>Hn/</em>数字<em>[1,10]</em>或<em>hc</em>或<em>D,</em>同时支持<em>max</em>函数<em>.</em></span><span class="s6"><em>823.8 FPS</em></span></footer>

<nav class="taskbar">
  <button class="start" aria-label="开始"><svg viewBox="0 0 16 16"><path d="M0 2.300 6.500 1.400V7.600H0zM7.300 1.300 16 0v7.600H7.300zM0 8.400h6.500v6.200L0 13.700zM7.300 8.400H16V16l-8.700-1.300z" fill="#fff"/></svg></button>
  <label class="cortana"><svg viewBox="0 0 22 22"><circle cx="11" cy="11" r="9" fill="none" stroke="#f0f0f0" stroke-width="3"/></svg><input type="text" placeholder="在这里输入你要搜索的内容"><svg class="mic" viewBox="0 0 12 18"><rect x="3.500" y="1" width="5" height="10" rx="2.500"/><path d="M1 8v5h10V8M6 13v4M3 17h6"/></svg></label>
  <button class="app w" aria-label="任务视图"><svg viewBox="0 0 24 24"><path d="M6.500 5.500h11v13h-11zM4 7.500H2.500v9H4M20 7.500h1.500v9H20" fill="none" stroke="#fff" stroke-width="1.200"/></svg></button>
  <button class="app w"><svg viewBox="0 0 24 24"><path d="M11 11Q3 12 3 6t7-5q3 1 1 10zM13 11Q12 3 18 3t5 6q-2 4-10 2zM13 13q8-1 8 5t-7 5q-3-1-1-10zM11 13q1 8-5 8t-5-6q2-4 10-2z" fill="#eee"/></svg></button>
  <button class="app w"><svg viewBox="0 0 24 24"><path d="M5 13h14q1-8-6-8-7 1-7 8 0 7 7 7 4 0 6-4" fill="none" stroke="#eee" stroke-width="3.500"/><path d="M3 22Q0 17 9 8 18 0 21 3" fill="none" stroke="#eee" stroke-width="1.500"/></svg></button>
  <button class="app w"><svg viewBox="0 0 24 24"><path d="M19 5Q8-1 4 8q-3 9 6 13 9 2 9-8-4-1-7 2M17 8q-9-4-10 3 0 6 6 6M12 12q5-3 9-1" fill="none" stroke="#bbb" stroke-width="1.300"/></svg></button>
  <button class="app n first"><svg viewBox="0 0 24 24"><path d="M2 11Q4 2 12 2q10 0 10 11H9q0 6 6 6 4 0 6-2v4q-3 2-8 2Q4 22 4 14q1-5 6-7Q5 7 2 11zM9 10h7q-1-3-3.500-3T9 10z" fill="#1080e0"/></svg></button>
  <button class="app n"><svg viewBox="0 0 24 24"><path d="M6 14h13q1-8-6-8-7 1-7 7 0 7 7 7 4 0 6-4" fill="none" stroke="#48b0f0" stroke-width="4"/><path d="M3 22Q-1 17 9 8 19-1 22 3q1 2-1 6" fill="none" stroke="#f8c838" stroke-width="2"/></svg></button>
  <button class="app n"><svg viewBox="0 0 24 24"><path d="M1 3h8l2 2h12v16H1z" fill="#f5c850"/><path d="M1 7h22v14H1z" fill="#ffe596"/><path d="M6 13h12v9h-3v-5H9v5H6z" fill="#3aa0e8"/></svg></button>
  <button class="app n run"><svg viewBox="0 0 24 24"><path d="M21 3Q8-2 3 8q-4 9 5 14 12 4 13-10-5-2-9 1l4 1q-3 4-6 1-3-5 2-8 4-2 8 0z" fill="#1e98f0"/></svg></button>
  <button class="app n run"><svg viewBox="0 0 24 24"><circle cx="12" cy="12" r="11" fill="#4cb828"/><path d="M7 12h10q0-5-5-5-4 0-5 5 0 5 5 5 3 0 5-2" fill="none" stroke="#fff" stroke-width="2.500"/><path d="M4 20Q2 14 20 4" fill="none" stroke="#d8f0c0"/></svg></button>
  <button class="app n run active"><svg viewBox="0 0 16 16"><use href="#app"/></svg></button>
  <button class="app n run"><svg viewBox="0 0 24 24"><path d="M1 1h22v22H1z" fill="#f0a020"/><path d="M4 3h14v16H4z" fill="#fff4d0"/><path d="M6 7h9M6 11h7M6 15h5" stroke="#a86818"/><path d="m10 17 3-1 9-11-2-2-9 11z" fill="#703010"/></svg></button>
  <span class="link">链接</span>
  <span class="cpu">27%<br>CPU使用</span>
  <div class="tray">
    <svg viewBox="0 0 16 16"><path d="m3 11 5-5 5 5"/></svg>
    <svg viewBox="0 0 16 16"><path d="M5.500 5.500h9v7h-9zM15 7.500v3M1.500 4h4v3h-4zM2.500 2v2M4.500 2v2M3.500 7v4"/><path d="M7 7h6v4H7z" fill="#fff"/></svg>
    <svg viewBox="0 0 16 16"><path d="M2 14Q3 4 14 3M6 14q1-6 8-7M9 14q1-3 5-4"/><circle cx="13" cy="13" r="1" fill="#fff"/></svg>
    <svg viewBox="0 0 16 16"><path d="M1 6h3l4-4v12l-4-4H1zM10 6q2 2 0 4M12 4q3 4 0 8M14 2q4 6 0 12"/></svg>
    <svg class="kb" viewBox="0 0 22 14"><path d="M.5 1.500h21v11H.5zM4 10h14"/><path d="M3 4.500h17M3 7.500h17" stroke-dasharray="1.500 1.500"/></svg>
    <span>中</span>
    <svg class="sg"><use href="#sg"/></svg>
  </div>
  <time>12:13<br>2018/6/25</time>
  <button class="notice" aria-label="通知中心"><svg viewBox="0 0 16 18"><path d="M.5 1.500h15v11h-5L8 15.500V12.500H.5z" fill="none" stroke="#fff" stroke-width="1.300"/></svg></button>
</nav>
</body>
</html>
```
FILE: styles.css
```css
* { box-sizing: border-box; }
html, body { height: 100%; }
body {
  margin: 0;
  display: flex;
  flex-direction: column;
  overflow: hidden;
  position: relative;
  background: #f0f0f0;
  color: #000;
  font: 12px/16px "Noto Sans", "Noto Sans CJK SC", sans-serif;
}
button, input, select { font: inherit; color: inherit; margin: 0; padding: 0; border: 0; background: none; border-radius: 0; outline: 0; }
select { appearance: none; }
button { white-space: nowrap; }
ul { list-style: none; margin: 0; padding: 0; }
svg { display: block; flex: none; }
em { font: 11px/14px "Liberation Mono", monospace; }
.defs { position: absolute; width: 0; height: 0; }
.i16 { width: 16px; height: 16px; }
.car { width: 6px; height: 4px; margin-left: -2px; }
.car.wide { margin-left: 2px; }
.more { width: 8px; height: 6px; margin-left: auto; align-self: flex-start; margin-top: 5px; }
.off { color: #6d6d6d; }
.tb { display: flex; align-items: center; gap: 4px; }

/* Title bar */
.titlebar { display: flex; align-items: center; height: 24px; flex: none; background: #fff; padding-left: 2px; gap: 5px; }
.titlebar h1 { margin: 0; font-size: 13px; font-weight: 400; color: #8c8c8c; white-space: nowrap; }
.winctl { margin-left: auto; display: flex; padding-right: 3px; }
.winctl button { width: 45px; height: 20px; display: flex; align-items: center; justify-content: center; }
.winctl svg { width: 12px; height: 12px; fill: none; stroke: #8a8a8a; }

/* Floating input-method bar */
.ime { position: absolute; top: 0; right: 275px; display: flex; z-index: 5; }
.imelogo { width: 28px; height: 28px; margin-right: -5px; z-index: 1; }
.imebar { margin-top: 3px; height: 24px; width: 184px; border: 1px solid #b4c0da; background: #fff; display: flex; align-items: center; justify-content: space-between; padding: 0 4px 0 10px; }
.imebar b { color: #1f6fc4; font-size: 14px; }
.imebar svg { width: 16px; height: 16px; fill: #1f78d0; }
.imebar .dim { fill: #a8b4cc; }

/* Menu */
.menubar { display: flex; height: 28px; flex: none; }
.menus { display: flex; align-items: center; gap: 11px; padding: 0 8px 0 7px; white-space: nowrap; }
.menus .robot { margin-left: -3px; }
.tip { flex: 1; display: flex; align-items: center; padding-left: 28px; color: #0d6b6b; text-decoration: none; background: linear-gradient(#fafafa, #f0f0f0); white-space: nowrap; overflow: hidden; }
.account { display: flex; align-items: center; gap: 10px; width: 240px; padding: 0 5px 0 4px; background: linear-gradient(#fcfcfc, #ededed); }
.bell { margin-left: -2px; }

/* Toolbars */
.bar { display: flex; align-items: center; gap: 7px; white-space: nowrap; overflow: hidden; background: linear-gradient(#fcfcfc, #ececec); border-radius: 3px; }
.sep { width: 1px; height: 16px; margin: 0 -1px; background: #b8b8b8; flex: none; }
.sep.tall { height: 24px; background: #999; }
.toolrow { display: flex; flex: none; height: 30px; padding: 2px 0 1px; gap: 4px; }
.bar-file { width: 149px; padding-left: 4px; gap: 7px; }
.bar-edit { width: 549px; padding: 0 4px; }
.bar-view { flex: 1; padding-right: 5px; }
.sigma { width: 16px; text-align: center; font: bold 14px "Liberation Serif", serif; }
.viewsel { display: flex; align-items: center; width: 62px; height: 23px; border: 1px solid #6e6e6e; padding: 0 2px; gap: 2px; color: #6d6d6d; margin-right: -4px; background: #f4f4f4; }
.viewsel select { flex: 1; width: 30px; }

/* Work area */
.work { flex: 1; min-height: 0; display: flex; gap: 6px; padding: 2px 0 1px; }
.nav { width: 165px; flex: none; display: flex; flex-direction: column; gap: 1px; margin-bottom: 1px; }
.navhead { display: flex; align-items: center; gap: 9px; height: 16px; border: 1px solid #8a8a8a; padding-right: 4px; font-size: 13px; line-height: 14px; background: #f0f0f0; }
.navhead span { margin-right: auto; }
.navhead svg { width: 9px; height: 9px; fill: none; stroke: #000; }
.navbtn { height: 21px; border: 1px solid #a0a0a0; border-top-color: #fff; border-left-color: #d0d0d0; background: #f0f0f0; text-align: center; }
.navtools { height: 26px; display: flex; align-items: center; gap: 5px; padding-left: 6px; background: linear-gradient(#fdfdfd, #ececec); }
.navtools svg { width: 18px; height: 16px; }
.treebox { flex: 1; min-height: 0; display: flex; margin: 0 1px 0 2px; border: 1px solid #828790; background: #fff; overflow: hidden; }
.tree { flex: 1; padding-top: 1px; }
.tree li { display: flex; align-items: center; height: 16px; padding-left: 7px; white-space: nowrap; }
.tree li > .i16 { margin-right: 4px; }
.ex { width: 10px; height: 10px; }
.flip { transform: rotate(180deg); }
.dot { width: 10px; height: 1px; flex: none; background: repeating-linear-gradient(90deg, #777 0 1px, transparent 1px 2px); }
.dot.s { width: 3px; margin: 0 1px 0 2px; }
.tree .c {
  padding-left: 31px;
  background: linear-gradient(#777 50%, transparent 50%) 12px 0 / 1px 2px repeat-y,
              linear-gradient(#777 50%, transparent 50%) 31px 0 / 1px 2px repeat-y;
}
.tree .c .dot { margin-right: 1px; }
.tree .sel div { display: flex; align-items: center; gap: 4px; background: #d9d9d9; padding-right: 4px; height: 16px; }
.scroll { width: 16px; background: #f0f0f0; display: flex; flex-direction: column; align-items: center; padding: 5px 0; gap: 80px; }
.thumb { width: 15px; flex: 0 1 287px; margin-bottom: auto; background: #cdcdcd; }

.right { flex: 1; min-width: 0; display: flex; flex-direction: column; }
.bar-comp { height: 28px; flex: none; padding-left: 4px; }
.floor { display: flex; align-items: center; gap: 5px; margin-left: -3px; }
.floorsel { width: 60px; height: 21px; background: #fff; display: flex; align-items: center; padding: 0 2px; }
.floorsel select { flex: 1; }
.panes { flex: 1; min-height: 0; display: flex; gap: 4px; }
.comps { width: 183px; margin-top: 3px; display: flex; flex-direction: column; background: #fff; }
.search { display: flex; height: 27px; padding: 2px 0 1px 1px; }
.search input { width: 157px; border: 1px solid #767676; padding: 0 3px; background: #fff; }
.search input::placeholder { color: #7a7a7a; opacity: 1; }
.search button { flex: 1; display: flex; align-items: center; justify-content: center; }
.search svg { width: 14px; height: 14px; }
.ctree { flex: 1; border: 1px solid #828790; border-width: 1px 2px 2px 1px; padding-top: 1px; }
.ctree li { display: flex; align-items: center; height: 16px; padding-left: 32px; background: linear-gradient(#777 50%, transparent 50%) 32px 0 / 1px 2px repeat-y; }
.ctree .top { padding-left: 6px; background: none; }
.ctree .top .i16 { margin-right: 4px; }
.ctree .top .dot { margin-right: 3px; margin-left: 2px; }
.ctree div { display: flex; align-items: center; gap: 7px; height: 16px; padding: 0 2px 0 4px; margin-left: -2px; }
.ctree .sel div { background: #316ac5; }
.ctree .e { background: linear-gradient(#777, #777) 32px 0 / 1px 8px no-repeat; }
.g { width: 12px; height: 12px; }

/* Property editor */
.editor { flex: 1; min-width: 0; position: relative; display: flex; flex-direction: column; }
.tabs { height: 21px; display: flex; border-bottom: 1px solid #d9d9d9; }
.tab { width: 64px; height: 21px; background: #fff; border: 1px solid #d9d9d9; border-bottom: 0; }
.sheet { flex: 1; min-height: 0; margin: 0 2px 1px 0; padding: 3px 3px 2px 4px; background: #fff; border: 1px solid #d9d9d9; border-top: 0; }
.props { width: 100%; table-layout: fixed; border-spacing: 0; border-top: 1px solid #a0a0a0; border-left: 1px solid #a0a0a0; }
.cn { width: 21px; } .cname { width: 190px; } .cval { width: 126px; }
.props th, .props td { padding: 0; height: 19px; line-height: 16px; font-weight: 400; text-align: left; border-right: 1px solid #bdbdbd; border-bottom: 1px solid #bdbdbd; white-space: nowrap; overflow: hidden; }
.props thead th { height: 24px; text-align: center; background: linear-gradient(#fbfbfb, #ededed); }
.props thead .hot { background: linear-gradient(#f9d8a0, #f0bd5c); color: #601040; }
.props tbody th { text-align: center; font: 11px/14px "Liberation Mono", monospace; background: linear-gradient(90deg, #fafafa, #ececec); }
.props td:nth-child(2) { padding-left: 20px; }
.props td:nth-child(3) { padding-left: 3px; }
.props .b { color: #0000f0; }
.props .dim td { color: #808080; }
.props .grp td:nth-child(2) { padding-left: 3px; }
.props .grp button { width: 13px; height: 13px; margin-right: 4px; border: 1px solid #b8b8b8; background: #fff; color: #000; font: 13px/10px "Liberation Sans", sans-serif; vertical-align: middle; }
.props .sub td:nth-child(2) {
  padding-left: 30px;
  background: linear-gradient(#b8b8b8, #b8b8b8) 9px 0 / 1px 100% no-repeat,
              linear-gradient(#b8b8b8, #b8b8b8) 9px 9px / 16px 1px no-repeat;
}
.props .sub.last td:nth-child(2) { background-size: 1px 9px, 16px 1px; }
.props .sub.cur td:nth-child(2) { background-color: #0078d7; color: #fff; }
.props .cur td:nth-child(3) { background: #d8eaf9; }
.props .cur th { background: #ffd48c; color: #601040; }
.rebar { display: inline-block; width: 12px; height: 12px; vertical-align: middle; fill: none; stroke: #000; stroke-width: 1.300; }
.mark { position: absolute; left: 12px; top: 250px; width: 251px; height: 34px; border: 3px solid #f00; z-index: 2; }

/* Section editor window */
.dialog { position: absolute; left: 278px; top: 0; right: 1px; bottom: 23px; z-index: 3; display: flex; flex-direction: column; border: 1px solid #333; border-right: 0; background: #b9d1ea; padding: 1px 0 7px 7px; }
.dialog h2 { margin: 0 0 0 -7px; padding: 4px 0 0 7px; height: 29px; flex: none; font-size: 12px; font-weight: 400; line-height: 30px; background: linear-gradient(#9ab5d3, #b6cfe9); }
.dbody { flex: 1; min-height: 0; display: flex; flex-direction: column; background: #f0f0f0; }
.dtabs { height: 21px; flex: none; display: flex; align-items: flex-end; padding-left: 2px; border-bottom: 1px solid #d9d9d9; }
.dtabs button { width: 46px; height: 19px; border: 1px solid #d9d9d9; border-bottom: 0; padding-right: 10px; }
.dtabs .on { width: 52px; height: 21px; background: #fff; padding-right: 14px; margin-bottom: -1px; }
.dtools { flex: 1; min-height: 0; display: flex; flex-direction: column; gap: 2px; background: #fff; padding: 3px 0 3px 5px; border-bottom: 1px solid #d9d9d9; }
.dbar { height: 26px; gap: 10px; padding-left: 4px; flex: none; }
.dbar .sep { height: 14px; margin: 0 -3px 0 -2px; }
.dinfo { height: 27px; gap: 2px; padding-left: 4px; flex: none; color: #6d6d6d; }
.grip { width: 2px; height: 15px; margin-right: -4px; background: repeating-linear-gradient(#b4b4b4 0 2px, transparent 2px 4px); flex: none; }
.dinfo .grip { margin-right: 3px; }
.combo { width: 133px; height: 23px; border: 1px solid #6e6e6e; background: #f6f6f6; display: flex; align-items: center; padding: 0 3px 0 2px; }
.combo select { flex: 1; }
.canvas { flex: 1; min-height: 0; background: #000; border: 2px solid #f00; border-right: 0; overflow: hidden; }
.axis text { font: 10px "Liberation Mono", monospace; fill: #555; }
.dimtext text { font: 24px "Liberation Serif", serif; fill: #fff; }
.note text { font: 300 24px "Noto Sans CJK SC", sans-serif; fill: #fff; }
.spec text { font: 20px "Liberation Mono", monospace; fill: #0f0; }
.dstatus { height: 23px; flex: none; display: flex; gap: 2px; padding-top: 3px; }
.dstatus output, .dstatus span { border: 1px solid #d4d4d4; background: linear-gradient(#fdfdfd, #eee); }
.dstatus output { width: 148px; padding-left: 8px; font: 10px/18px "Liberation Mono", monospace; }
.dstatus span { flex: 1; }

/* Status bar */
.status { height: 21px; flex: none; display: flex; gap: 2px; padding-bottom: 1px; white-space: nowrap; overflow: hidden; }
.status span { border: 1px solid #d0d0d0; padding-left: 1px; line-height: 19px; background: linear-gradient(#fdfdfd, #eee); }
.status em { font-size: 10px; }
.s1 { width: 148px; } .s2 { width: 78px; } .s3 { width: 98px; } .s4 { width: 48px; } .s5 { flex: 1; } .s6 { width: 69px; }

/* Taskbar */
.taskbar { height: 40px; flex: none; display: flex; align-items: stretch; background: #020d10; color: #fff; }
.start { width: 48px; background: #000; display: flex; align-items: center; justify-content: center; }
.start svg { width: 16px; height: 16px; }
.cortana { width: 343px; background: #333; display: flex; align-items: center; gap: 5px; padding: 0 14px 0 9px; }
.cortana > svg { width: 22px; height: 22px; }
.cortana .mic { width: 12px; height: 18px; fill: none; stroke: #999; }
.cortana input { flex: 1; font-size: 14px; }
.cortana input::placeholder { color: #8f8f8f; opacity: 1; }
.app { display: flex; align-items: center; justify-content: center; border-bottom: 2px solid transparent; border-top: 2px solid transparent; }
.app svg { width: 24px; height: 24px; }
.app.w { width: 51px; }
.app.n { width: 46px; margin-right: 2px; }
.app.first { margin-left: 3px; }
.app.run { border-bottom-color: #76b9ed; }
.app.active { background: #384448; }
.link { align-self: center; margin-left: 13px; width: 26px; }
.cpu, .taskbar time { text-align: center; line-height: 17px; padding-top: 3px; font-size: 12px; }
.cpu { width: 52px; margin-left: 18px; white-space: nowrap; }
.tray { display: flex; align-items: center; gap: 9px; margin-left: auto; }
.tray svg { width: 16px; height: 16px; fill: none; stroke: #fff; }
.tray .kb { width: 22px; height: 14px; }
.tray .sg { stroke: none; }
.taskbar time { width: 66px; margin-left: 14px; }
.notice { width: 46px; margin-right: 10px; display: flex; align-items: center; justify-content: center; }
.notice svg { width: 16px; height: 18px; }
```
